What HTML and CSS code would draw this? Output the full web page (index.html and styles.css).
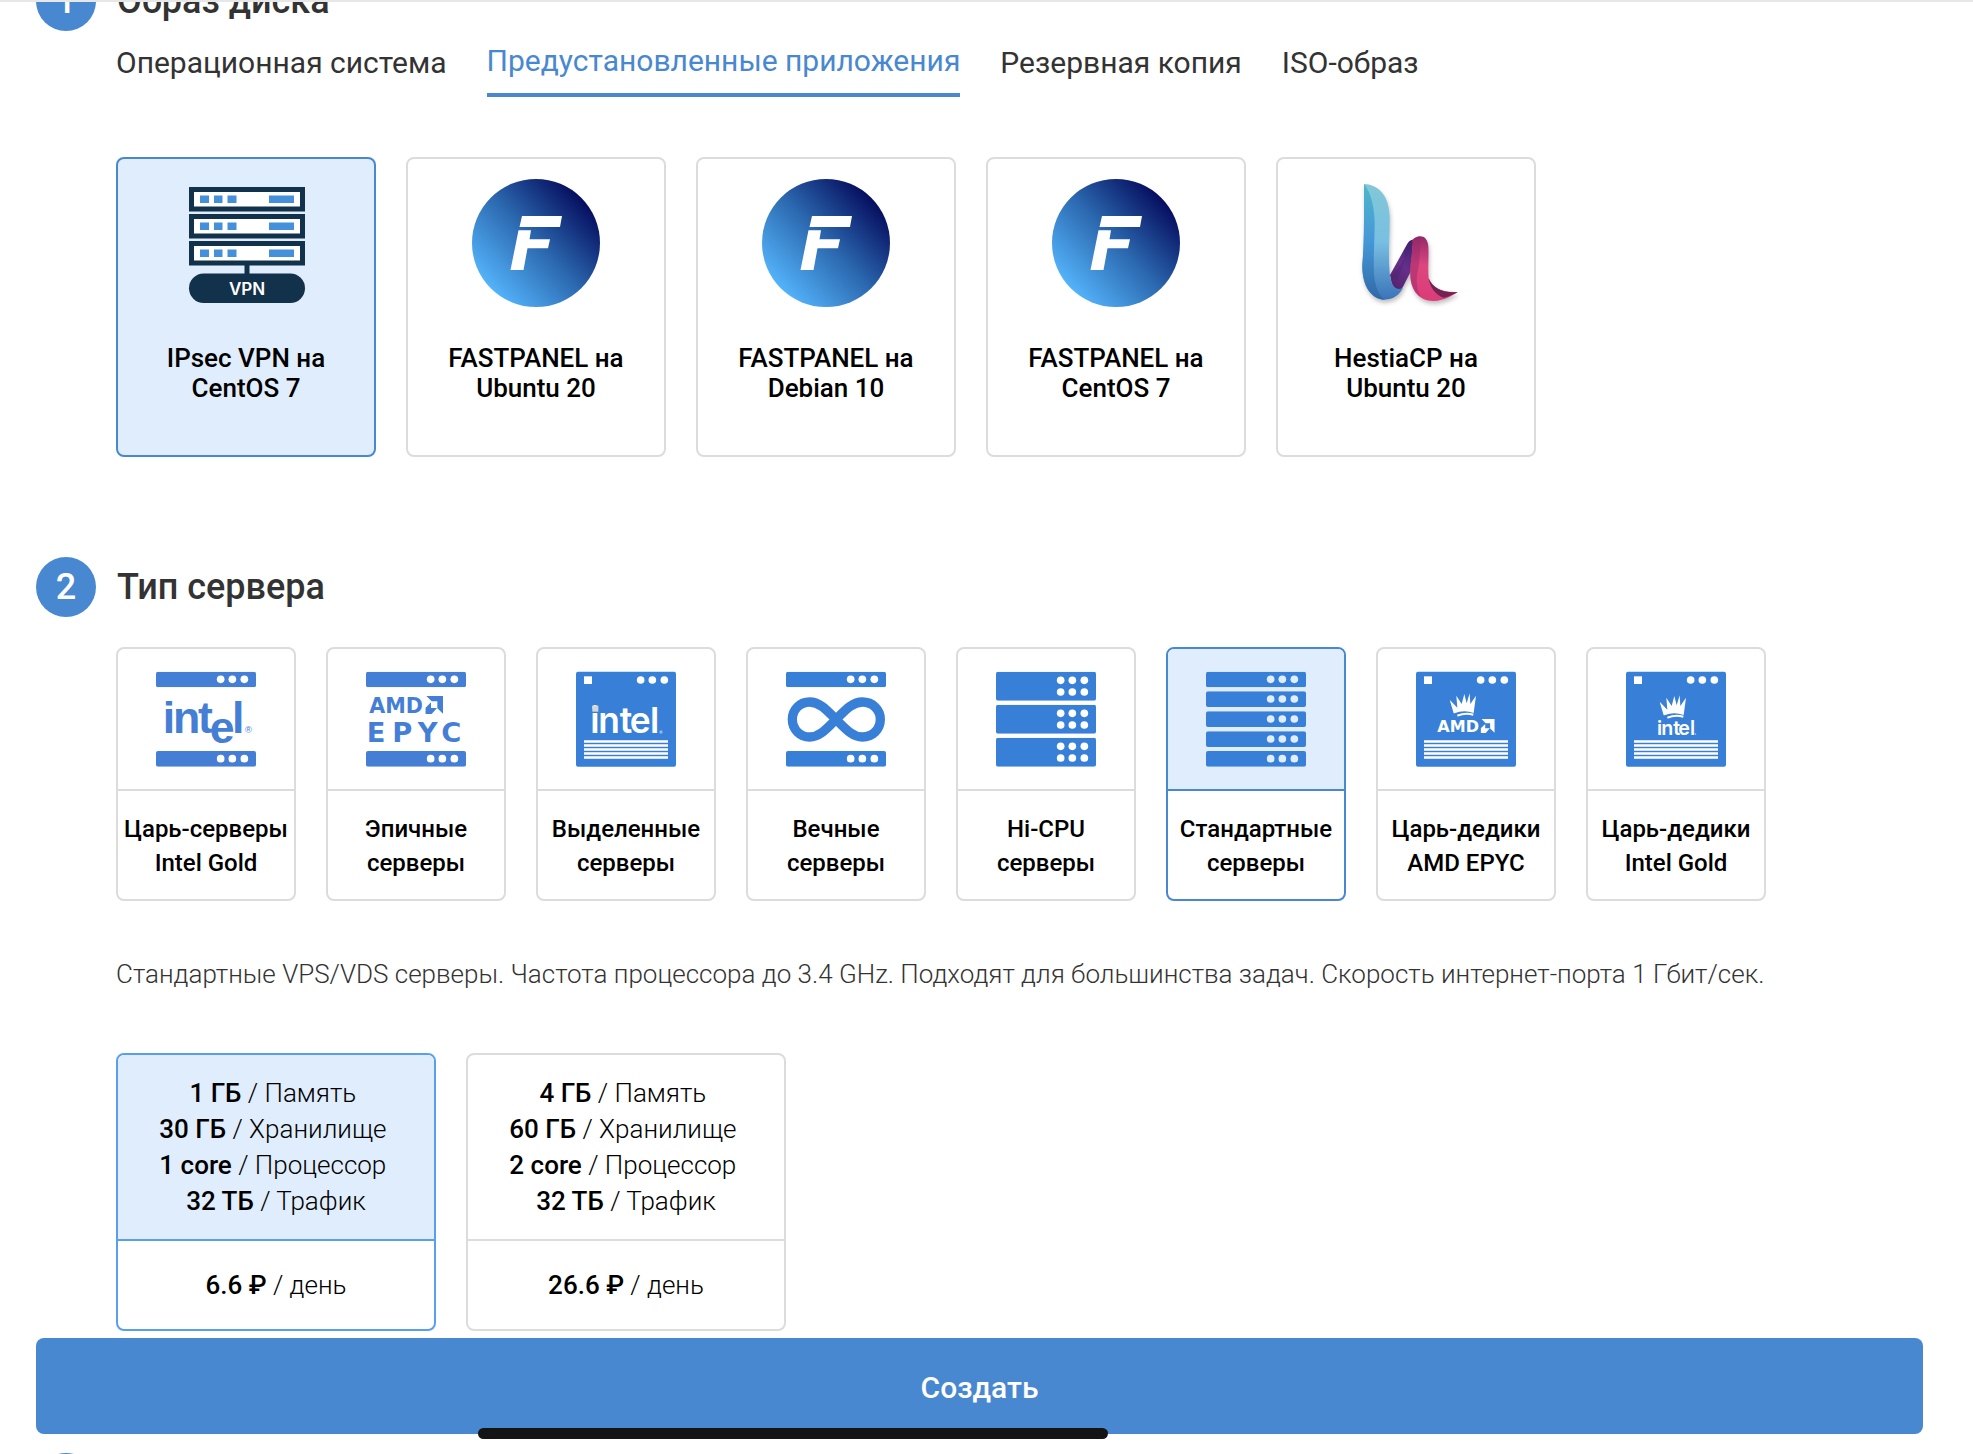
FILE: index.html
```html
<!DOCTYPE html>
<html lang="ru">
<head>
  <meta charset="utf-8">
  <meta name="viewport" content="width=device-width, initial-scale=1">
  <title>Создание сервера</title>
  <link rel="stylesheet" href="styles.css">
</head>
<body>
  <svg class="sprite" aria-hidden="true">
    <defs>
      <linearGradient id="fp-fill" x1="0.9" y1="0.15" x2="0.15" y2="0.85">
        <stop offset="0" stop-color="#04085a"/>
        <stop offset="0.5" stop-color="#2a66ad"/>
        <stop offset="1" stop-color="#53b2f9"/>
      </linearGradient>
      <linearGradient id="h-light" x1="0" y1="0" x2="0" y2="1">
        <stop offset="0" stop-color="#82c8d6"/>
        <stop offset="0.5" stop-color="#78bfe3"/>
        <stop offset="1" stop-color="#3a74b8"/>
      </linearGradient>
      <linearGradient id="h-dark" x1="0" y1="0" x2="0" y2="1">
        <stop offset="0" stop-color="#4fb6cb"/>
        <stop offset="0.5" stop-color="#4597d8"/>
        <stop offset="1" stop-color="#3069a6"/>
      </linearGradient>
      <linearGradient id="h-purple" x1="0.8" y1="0" x2="0.3" y2="1">
        <stop offset="0" stop-color="#432371"/>
        <stop offset="0.5" stop-color="#652f8c"/>
        <stop offset="1" stop-color="#55246f"/>
      </linearGradient>
      <linearGradient id="h-pink" x1="0" y1="0" x2="0" y2="1">
        <stop offset="0" stop-color="#94296a"/>
        <stop offset="0.45" stop-color="#dc477e"/>
        <stop offset="1" stop-color="#dc3b78"/>
      </linearGradient>
      <symbol id="fastpanel" viewBox="0 0 128 128">
        <circle cx="64" cy="64" r="64" fill="url(#fp-fill)"/>
        <path fill="#fff" d="M50 37H90L88 48H47.500ZM46.500 51.300H59L57.500 60.300H78L76 69.300H55.500L51.500 91H38.500Z"/>
      </symbol>
      <symbol id="vpn-unit" viewBox="0 0 116 25">
        <rect width="116" height="24.500" fill="#12314a"/>
        <rect x="5" y="5" width="106" height="14.500" fill="#fff"/>
        <path fill="#4490db" d="M11 8.500h9v7.500h-9zM25 8.500h8.500v7.500h-8.500zM38.500 8.500h9v7.500h-9zM80 8.500h25v7.500h-25z"/>
      </symbol>
      <symbol id="bar" viewBox="0 0 300 47">
        <rect width="300" height="47" rx="6"/>
        <g fill="var(--dot)"><circle cx="194" cy="23" r="11.500"/><circle cx="229" cy="23" r="11.500"/><circle cx="265" cy="23" r="11.500"/></g>
      </symbol>
      <symbol id="wide-bar" viewBox="0 0 300 87">
        <rect width="300" height="87" rx="6"/>
        <g fill="var(--dot)">
          <circle cx="194" cy="26" r="11.500"/><circle cx="229" cy="26" r="11.500"/><circle cx="265" cy="26" r="11.500"/>
          <circle cx="194" cy="61" r="11.500"/><circle cx="229" cy="61" r="11.500"/><circle cx="265" cy="61" r="11.500"/>
        </g>
      </symbol>
      <symbol id="case" viewBox="0 0 300 288">
        <rect y="2" width="300" height="285" rx="6"/>
        <g fill="#fff">
          <rect x="24" y="16" width="24" height="23"/>
          <circle cx="194" cy="27" r="11.500"/><circle cx="229" cy="27" r="11.500"/><circle cx="265" cy="27" r="11.500"/>
          <path d="M24 208h252v7H24zM24 220h252v7H24zM24 232h252v7H24zM24 244h252v7H24zM24 256h252v7H24z"/>
        </g>
      </symbol>
      <symbol id="amd-arrow" viewBox="0 0 53 54">
        <path d="M3 0H53V53L36 37V16H19ZM17 19V36H35L19 54H0V36Z"/>
      </symbol>
      <symbol id="crown" viewBox="0 0 80 70">
        <path d="M12 60L0 19L23 43L20 7L36 32L44 2L51 30L60 0L62 32L79 7L72 59Q43 48 14 60ZM22 64Q46 55 72 61L70 67Q46 61 24 70Z"/>
      </symbol>
    </defs>
  </svg>

  <main class="order">
    <div class="order__content">
      <section class="step">
        <header class="step__head">
          <span class="step__number">1</span>
          <h2 class="step__title">Образ диска</h2>
        </header>
        <div class="step__body">
          <nav class="tabs" aria-label="Образ диска">
            <a class="tabs__link" href="#os">Операционная система</a>
            <a class="tabs__link tabs__link--active" href="#apps" aria-current="true">Предустановленные приложения</a>
            <a class="tabs__link" href="#backup">Резервная копия</a>
            <a class="tabs__link" href="#iso">ISO-образ</a>
          </nav>

          <div class="cards cards--apps">
            <button class="card app card--selected" type="button" aria-pressed="true">
              <svg class="app__icon" viewBox="0 0 128 128" aria-hidden="true">
                <use href="#vpn-unit" x="7" y="8" width="116" height="25"/>
                <use href="#vpn-unit" x="7" y="35" width="116" height="25"/>
                <use href="#vpn-unit" x="7" y="62" width="116" height="25"/>
                <path fill="#12314a" d="M62.500 86h5v9h-5z"/>
                <rect x="7" y="94.500" width="116" height="29.500" rx="14.750" fill="#12314a"/>
                <text class="vpn-text" x="65" y="116" text-anchor="middle">VPN</text>
              </svg>
              <span class="app__name">IPsec VPN на CentOS 7</span>
            </button>
            <button class="card app" type="button" aria-pressed="false">
              <svg class="app__icon" aria-hidden="true"><use href="#fastpanel"/></svg>
              <span class="app__name">FASTPANEL на Ubuntu 20</span>
            </button>
            <button class="card app" type="button" aria-pressed="false">
              <svg class="app__icon" aria-hidden="true"><use href="#fastpanel"/></svg>
              <span class="app__name">FASTPANEL на Debian 10</span>
            </button>
            <button class="card app" type="button" aria-pressed="false">
              <svg class="app__icon" aria-hidden="true"><use href="#fastpanel"/></svg>
              <span class="app__name">FASTPANEL на CentOS 7</span>
            </button>
            <button class="card app" type="button" aria-pressed="false">
              <svg class="app__icon app__icon--shadow" viewBox="306 117 384 384" aria-hidden="true">
                <path fill="url(#h-purple)" d="M450 405L500 315C505 304 512 299 520 299L512 395L489 440C480 455 465 455 455 430Z"/>
                <path fill="#3f2168" d="M520 299C510 299 504 306 500 315L490 334C500 345 495 375 470 420L452 412L500 350Z" opacity="0.25"/>
                <path fill="url(#h-light)" d="M372 132C420 135 447 170 449 230C449 290 445 340 448 385C450 430 462 456 489 444C478 465 460 478 434 479C395 478 366 440 367 375C374 300 372 220 372 132Z"/>
                <path fill="url(#h-dark)" d="M372 132C395 160 405 210 404 260C403 310 400 350 402 400C404 440 418 468 434 479C395 478 366 440 367 375C373 300 372 220 372 132Z"/>
                <path fill="url(#h-pink)" d="M517 300C535 282 563 284 565 320C567 350 563 380 566 415C574 440 600 458 653 456C640 465 615 482 580 483C540 482 512 455 511 405C509 370 519 340 517 300Z"/>
                <path fill="#94296a" opacity="0.45" d="M517 300C525 292 533 289 541 289C541 330 540 365 532 400C528 425 530 445 542 470C520 455 511 430 511 405C509 370 519 340 517 300Z"/>
                <path fill="#6f2452" d="M566 415C580 445 605 460 653 456C640 463 630 468 612 473C590 468 570 445 566 415Z"/>
              </svg>
              <span class="app__name">HestiaCP на Ubuntu 20</span>
            </button>
          </div>
        </div>
      </section>

      <section class="step">
        <header class="step__head">
          <span class="step__number">2</span>
          <h2 class="step__title">Тип сервера</h2>
        </header>
        <div class="step__body">
          <div class="cards cards--types">
            <button class="card type" type="button" aria-pressed="false">
              <span class="type__picture">
                <svg class="type__icon type__icon--soft" viewBox="0 0 300 288" aria-hidden="true">
                  <use href="#bar" y="2" width="300" height="47"/>
                  <text class="intel-old" x="20 51 126 161 228" y="185 185 185 215 185">intel</text>
                  <text class="intel-mark" x="267" y="186">®</text>
                  <use href="#bar" y="240" width="300" height="47"/>
                </svg>
              </span>
              <span class="type__name">Царь-серверы Intel Gold</span>
            </button>
            <button class="card type" type="button" aria-pressed="false">
              <span class="type__picture">
                <svg class="type__icon type__icon--soft" viewBox="0 0 300 288" aria-hidden="true">
                  <use href="#bar" y="2" width="300" height="47"/>
                  <text class="amd" x="10" y="126">AMD</text>
                  <use href="#amd-arrow" x="178" y="75" width="53" height="54"/>
                  <text class="epyc" x="2 79 155 226" y="213">EPYC</text>
                  <use href="#bar" y="240" width="300" height="47"/>
                </svg>
              </span>
              <span class="type__name">Эпичные серверы</span>
            </button>
            <button class="card type" type="button" aria-pressed="false">
              <span class="type__picture">
                <svg class="type__icon" viewBox="0 0 300 288" aria-hidden="true">
                  <use href="#case" width="300" height="288"/>
                  <text class="intel-new" x="43 67 131 161 222" y="187">intel</text>
                  <rect x="49" y="104" width="18" height="18" fill="#d3d5d8"/>
                  <circle cx="255" cy="183" r="5" fill="#8fb9ea"/>
                </svg>
              </span>
              <span class="type__name">Выделенные серверы</span>
            </button>
            <button class="card type" type="button" aria-pressed="false">
              <span class="type__picture">
                <svg class="type__icon" viewBox="0 0 300 288" aria-hidden="true">
                  <use href="#bar" y="2" width="300" height="47"/>
                  <path class="infinity" d="M150 145C120 115 100 93 71 93C42 93 19 116 19 145C19 175 42 198 71 198C100 198 120 175 150 145C180 115 200 93 229 93C260 93 283 116 283 145C283 175 260 198 229 198C200 198 180 175 150 145Z"/>
                  <use href="#bar" y="240" width="300" height="47"/>
                </svg>
              </span>
              <span class="type__name">Вечные серверы</span>
            </button>
            <button class="card type" type="button" aria-pressed="false">
              <span class="type__picture">
                <svg class="type__icon" viewBox="0 0 300 288" aria-hidden="true">
                  <use href="#wide-bar" y="2" width="300" height="87"/>
                  <use href="#wide-bar" y="101" width="300" height="87"/>
                  <use href="#wide-bar" y="200" width="300" height="87"/>
                </svg>
              </span>
              <span class="type__name">Hi-CPU серверы</span>
            </button>
            <button class="card type card--selected" type="button" aria-pressed="true">
              <span class="type__picture">
                <svg class="type__icon" viewBox="0 0 300 288" aria-hidden="true">
                  <use href="#bar" y="2" width="300" height="47"/>
                  <use href="#bar" y="61" width="300" height="47"/>
                  <use href="#bar" y="121" width="300" height="47"/>
                  <use href="#bar" y="181" width="300" height="47"/>
                  <use href="#bar" y="240" width="300" height="47"/>
                </svg>
              </span>
              <span class="type__name">Стандартные серверы</span>
            </button>
            <button class="card type" type="button" aria-pressed="false">
              <span class="type__picture">
                <svg class="type__icon" viewBox="0 0 300 288" aria-hidden="true">
                  <use href="#case" width="300" height="288"/>
                  <g fill="#fff">
                    <use href="#crown" x="101" y="67" width="80" height="70"/>
                    <text class="amd amd--small" x="64" y="183">AMD</text>
                    <use href="#amd-arrow" x="193" y="144" width="44" height="42"/>
                  </g>
                </svg>
              </span>
              <span class="type__name">Царь-дедики AMD EPYC</span>
            </button>
            <button class="card type" type="button" aria-pressed="false">
              <span class="type__picture">
                <svg class="type__icon" viewBox="0 0 300 288" aria-hidden="true">
                  <use href="#case" width="300" height="288"/>
                  <use href="#crown" x="101" y="73" width="80" height="70" fill="#fff"/>
                  <text class="intel-new intel-new--small" x="93 106 142 157 192" y="192">intel</text>
                  <circle cx="208" cy="189" r="3" fill="#8fb9ea"/>
                </svg>
              </span>
              <span class="type__name">Царь-дедики Intel Gold</span>
            </button>
          </div>

          <p class="note">Стандартные VPS/VDS серверы. Частота процессора до 3.4 GHz. Подходят для большинства задач. Скорость интернет-порта 1 Гбит/сек.</p>

          <div class="cards cards--plans">
            <button class="card plan card--selected" type="button" aria-pressed="true">
              <span class="plan__specs">
                <span><b>1 ГБ</b> / Память&nbsp;</span>
                <span><b>30 ГБ</b> / Хранилище&nbsp;</span>
                <span><b>1 core</b> / Процессор&nbsp;</span>
                <span><b>32 ТБ</b> / Трафик</span>
              </span>
              <span class="plan__price"><b>6.6 ₽</b> / день</span>
            </button>
            <button class="card plan" type="button" aria-pressed="false">
              <span class="plan__specs">
                <span><b>4 ГБ</b> / Память&nbsp;</span>
                <span><b>60 ГБ</b> / Хранилище&nbsp;</span>
                <span><b>2 core</b> / Процессор&nbsp;</span>
                <span><b>32 ТБ</b> / Трафик</span>
              </span>
              <span class="plan__price"><b>26.6 ₽</b> / день</span>
            </button>
          </div>
        </div>
      </section>

      <section class="step step--next">
        <header class="step__head">
          <span class="step__number">3</span>
        </header>
      </section>
    </div>

    <button class="create" type="submit">Создать</button>
    <div class="home-indicator"></div>
  </main>
</body>
</html>
```
FILE: styles.css
```css
:root {
  --blue: #4888d0;
  --blue-light: #e0edfd;
  --line: #dcdcdc;
  --text: #333;
  --dot: #fff;
}

* {
  box-sizing: border-box;
}

body {
  margin: 0;
  background: #fff;
  color: var(--text);
  font-family: Roboto, "Noto Sans", sans-serif;
}

button {
  margin: 0;
  padding: 0;
  border: 0;
  background: none;
  color: inherit;
  font: inherit;
  cursor: pointer;
}

b {
  font-weight: 500;
}

.sprite {
  position: absolute;
  width: 0;
  height: 0;
}

/* The form is a full-height viewport scrolled partway down */
.order {
  position: relative;
  height: 100vh;
  overflow: hidden;
  border-top: 2px solid #e7e7e7;
}

.order__content {
  margin-top: -31px;
  padding: 0 50px 0 36px;
}

.step + .step {
  margin-top: 100px;
}

.step + .step--next {
  margin-top: 122px;
}

.step__head {
  display: flex;
  align-items: center;
  gap: 21px;
}

.step__number {
  display: flex;
  align-items: center;
  justify-content: center;
  width: 60px;
  height: 60px;
  border-radius: 50%;
  background: var(--blue);
  color: #fff;
  font-size: 36px;
  font-weight: 500;
  line-height: 42px;
}

.step__title {
  margin: 0;
  font-size: 36px;
  font-weight: 500;
  line-height: 42px;
}

.step__body {
  padding-left: 80px;
}

.tabs {
  display: flex;
  flex-wrap: wrap;
  align-items: flex-start;
  gap: 40px;
  margin-top: 10px;
}

.tabs__link {
  padding-top: 2px;
  color: var(--text);
  font-size: 30px;
  line-height: 40px;
  text-decoration: none;
}

.tabs__link--active {
  padding: 0 0 12px;
  border-bottom: 4px solid var(--blue);
  color: var(--blue);
}

.cards {
  display: flex;
  flex-wrap: wrap;
  gap: 30px;
}

.cards--apps {
  margin-top: 60px;
}

.cards--types {
  margin-top: 30px;
}

.card {
  display: flex;
  flex-direction: column;
  overflow: hidden;
  border: 2px solid var(--line);
  border-radius: 8px;
  background: #fff;
  color: #000;
  text-align: center;
}

.card--selected {
  border-color: var(--blue);
}

.app {
  align-items: center;
  justify-content: flex-start;
  gap: 36px;
  width: 260px;
  min-height: 300px;
  padding: 20px 30px;
}

.app.card--selected {
  background: var(--blue-light);
}

.app__icon {
  width: 128px;
  height: 128px;
}

.app__icon--shadow {
  filter: drop-shadow(1px 3px 2px rgba(0, 0, 0, 0.25));
}

.app__name {
  font-size: 26px;
  font-weight: 500;
  line-height: 30px;
}

.type {
  width: 180px;
}

.type__picture {
  display: flex;
  justify-content: center;
  align-self: stretch;
  padding: 22px 0;
  border-bottom: 2px solid var(--line);
}

.type__name {
  align-self: stretch;
  padding: 21px 4px 19px;
  font-size: 24px;
  font-weight: 500;
  line-height: 34px;
}

.type__icon {
  width: 100px;
  height: 96px;
  fill: #387fd8;
}

.type__icon--soft {
  fill: #457fd5;
}

.card--selected .type__picture {
  --dot: var(--blue-light);
  border-color: var(--blue);
  background: var(--blue-light);
}

.note {
  margin: 55px 0 61px;
  font-size: 26px;
  font-weight: 300;
  line-height: 36px;
}

.plan {
  width: 320px;
  font-size: 26px;
  font-weight: 300;
  line-height: 36px;
}

.plan__specs {
  display: flex;
  flex-direction: column;
  align-self: stretch;
  padding: 20px 0;
  border-bottom: 2px solid var(--line);
}

.plan__price {
  align-self: stretch;
  padding: 26px 0;
}

.plan.card--selected,
.card--selected .plan__specs {
  border-color: #589ff2;
}

.card--selected .plan__specs {
  background: var(--blue-light);
}

/* Pinned over the scrolled form */
.create {
  position: absolute;
  right: 50px;
  bottom: 20px;
  left: 36px;
  padding: 30px 0 26px;
  border-radius: 8px;
  background: var(--blue);
  color: #fff;
  font-size: 30px;
  font-weight: 500;
  line-height: 40px;
}

.home-indicator {
  position: absolute;
  bottom: 15px;
  left: 478px;
  width: 630px;
  height: 11px;
  border-radius: 6px;
  background: #141414;
}

/* Lettering inside the icons */
.vpn-text {
  fill: #fff;
  font: 600 17px Inter, sans-serif;
}

.intel-old {
  font: 700 134px "Liberation Sans", sans-serif;
}

.intel-mark {
  font: 400 28px "Liberation Sans", sans-serif;
}

.amd {
  font: 700 62px "DejaVu Sans", sans-serif;
}

.amd--small {
  font-size: 48px;
}

.epyc {
  font: 700 82px "DejaVu Sans", sans-serif;
}

.intel-new {
  fill: #fff;
  font: 600 106px Inter, sans-serif;
}

.intel-new--small {
  font-size: 59px;
}

.infinity {
  fill: none;
  stroke: #387fd8;
  stroke-width: 28px;
}
```
